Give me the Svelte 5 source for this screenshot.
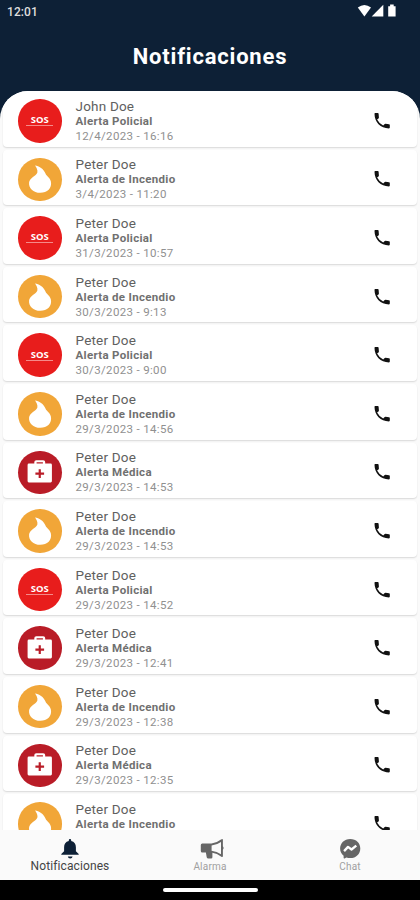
<script>
  const police = 'Alerta Policial';
  const fire = 'Alerta de Incendio';
  const medical = 'Alerta Médica';
  const items = [
    ['John Doe', police, '12/4/2023 - 16:16'],
    ['Peter Doe', fire, '3/4/2023 - 11:20'],
    ['Peter Doe', police, '31/3/2023 - 10:57'],
    ['Peter Doe', fire, '30/3/2023 - 9:13'],
    ['Peter Doe', police, '30/3/2023 - 9:00'],
    ['Peter Doe', fire, '29/3/2023 - 14:56'],
    ['Peter Doe', medical, '29/3/2023 - 14:53'],
    ['Peter Doe', fire, '29/3/2023 - 14:53'],
    ['Peter Doe', police, '29/3/2023 - 14:52'],
    ['Peter Doe', medical, '29/3/2023 - 12:41'],
    ['Peter Doe', fire, '29/3/2023 - 12:38'],
    ['Peter Doe', medical, '29/3/2023 - 12:35'],
    ['Peter Doe', fire, '']
  ].map(([name, alert, date]) => ({ name, alert, date }));
</script>

<div class="screen">
  <div class="status">
    <span class="clock">12:01</span>
    <svg class="signals" width="42" height="14" viewBox="0 0 42 14">
      <path d="M.8 3.6Q7.4-1.600 14 3.600L7.400 12.600z" />
      <path d="M26.300.8V12.600H14.700z" />
      <path d="M31.200 2.200h1.900V.5h3.600v1.700h1.900v10.400h-7.400z" />
    </svg>
  </div>
  <header><h1>Notificaciones</h1></header>
  <main>
    {#each items as item}
      <article>
        <div class="badge" class:fire={item.alert === fire} class:medical={item.alert === medical}>
          {#if item.alert === police}
            <span class="sos">SOS</span>
          {:else if item.alert === fire}
            <svg width="44" height="44" viewBox="0 0 44 44">
              <path fill="#fff" d="M17.200 8.300C21 8.800 26.200 11.800 27.800 16.400C28.700 19 32.200 20.400 33.200 24.300C34.800 31.300 29.400 36 22.600 36C15.400 36 10.600 31.300 11.200 25.500C11.700 20.600 18.400 19 19.600 15.300C20.100 12.700 18.600 10 17.200 8.300z" />
            </svg>
          {:else}
            <svg width="44" height="44" viewBox="0 0 44 44">
              <path fill="#fff" fill-rule="evenodd" d="M11 13.500h5.500v-1.500q0-2 2-2h7q2 0 2 2v1.500H33q1.300 0 1.300 1.300v16.400q0 1.300-1.300 1.300H11q-1.300 0-1.300-1.300V14.800Q9.700 13.500 11 13.500zM18.800 13.500h6.400v-1.300h-6.400z" />
              <path fill="#b91c27" d="M20.900 19.200h2.200v3.300h3.300v2.200h-3.300v3.300h-2.200v-3.300h-3.300v-2.200h3.300z" />
            </svg>
          {/if}
        </div>
        <div class="info">
          <span class="name">{item.name}</span>
          <strong>{item.alert}</strong>
          <time>{item.date}</time>
        </div>
        <svg class="phone" width="18" height="18" viewBox="0 0 18 18">
          <path d="M1.500 1.800Q1.500 1.100 2.200 1.100H4.800Q5.500 1.100 5.600 1.800L5.900 5.400Q5.900 6.100 5.400 6.500L4.100 7.600Q6 11.500 10.200 13.500L11.400 12.200Q11.900 11.700 12.600 11.800L16 12.200Q16.800 12.300 16.800 13.100V15.600Q16.800 16.400 16 16.400C7.500 16.300 1.500 10.200 1.500 1.800z" />
        </svg>
      </article>
    {/each}
  </main>
  <nav>
    <div class="tab active">
      <svg width="20" height="22" viewBox="0 0 20 22">
        <path fill="#0d2036" d="M8.800 2.900V2.200a1.200 1.200 0 0 1 2.400 0v.7c3.200.7 4.700 3.100 4.700 6.400v4l2.800 2.600v.8H1.300v-.8l2.800-2.600V9.300c0-3.300 1.500-5.700 4.700-6.400zM7.800 18.600h4.800q-.3 1.900-2.400 1.900t-2.400-1.900z" />
      </svg>
      <span>Notificaciones</span>
    </div>
    <div class="tab">
      <svg class="horn" width="26" height="22" viewBox="0 0 26 22">
        <path fill="#666" fill-rule="evenodd" d="M3.300 5.500H12.500Q17.500 5.200 22 1.600Q23.900.3 23.900 2.100V8.300Q25.500 10 23.900 11.700V18Q23.900 19.800 22 18.500Q18.100 15.200 13.400 14.700V19.200Q13.400 20.500 12.100 20.500H9.400Q8 20.500 7.700 19.200L6.900 14.600H3.300Q1.800 14.600 1.800 13.100V7Q1.800 5.500 3.300 5.500zM12.600 7.500v5.200q5.300.5 9.400 3.500V4.100Q17.900 7.100 12.600 7.500z" />
      </svg>
      <span class="wide">Alarma</span>
    </div>
    <div class="tab">
      <svg width="22" height="22" viewBox="0 0 22 22">
        <path fill="#666" d="M11.200.9C5.200.9 1.100 5.200 1.100 10.600c0 3 1.300 5.500 3.500 7.200v2q.1.900 1 .6l1.800-.9q1.800.6 3.800.6c6 0 10.100-4.300 10.100-9.700S17.200.9 11.200.9z" />
        <path fill="none" stroke="#fff" stroke-width="2.300" stroke-linejoin="round" d="M5.100 13.100L9 8.900L12.500 11.500L17.300 7.700" />
      </svg>
      <span class="wide">Chat</span>
    </div>
  </nav>
  <div class="system"><i></i></div>
</div>

<style>
  .screen {
    height: 900px;
    display: flex;
    flex-direction: column;
    overflow: hidden;
    background: #0d2036;
    font-family: Roboto, sans-serif;
  }
  .status {
    flex: none;
    height: 24px;
    display: flex;
    justify-content: space-between;
    padding: 4px 21px 0 7px;
    box-sizing: border-box;
    color: #ddd;
  }
  .clock { font-size: 12px; line-height: 16px; font-weight: 500; letter-spacing: .1px; }
  .signals { fill: #fff; }
  header { flex: none; height: 67px; text-align: center; }
  h1 {
    margin: 0;
    padding-top: 19px;
    font-size: 22px;
    line-height: 28px;
    font-weight: 700;
    letter-spacing: .8px;
    color: #fff;
  }
  main {
    flex: 1;
    min-height: 0;
    overflow: hidden;
    background: #fafafa;
    border-radius: 28px 28px 0 0;
    padding: 0 3px;
  }
  article {
    height: 55.600px;
    margin-bottom: 3px;
    box-sizing: border-box;
    display: flex;
    align-items: center;
    padding: 4px 26px 0 15px;
    background: #fff;
    border-radius: 4px;
    box-shadow: 0 1px 1.500px #0002;
  }
  .badge {
    width: 43.500px;
    height: 43.500px;
    flex: none;
    border-radius: 50%;
    background: #e81d1c;
    display: flex;
    align-items: center;
    justify-content: center;
  }
  .badge.fire { background: #f1a638; }
  .badge.medical { background: #b91c27; }
  .sos {
    width: 27px;
    margin-bottom: 1px;
    border-bottom: 1px solid #f58a89;
    color: #fff;
    text-align: center;
    font: 700 9.500px/11px "Open Sans", sans-serif;
  }
  .info {
    flex: 1;
    margin-left: 14px;
    display: flex;
    flex-direction: column;
    color: #707070;
  }
  .name { margin-top: -1px; font-size: 13.500px; line-height: 16px; letter-spacing: .2px; color: #606060; }
  strong { font-size: 11.500px; line-height: 15px; font-weight: 700; letter-spacing: .31px; }
  time { height: 14px; font-size: 11.500px; line-height: 14px; letter-spacing: .34px; color: #909090; }
  .phone { flex: none; fill: #111; }
  nav {
    flex: none;
    height: 50px;
    display: flex;
    background: #fafafa;
  }
  .tab {
    flex: 1;
    padding-top: 8px;
    display: flex;
    flex-direction: column;
    align-items: center;
    font-size: 10px;
    line-height: 13px;
    color: #a0a0a0;
  }
  .tab svg { flex: none; }
  .tab .horn { margin-left: 3px; }
  .wide { letter-spacing: .2px; }
  .active { color: #444; font-size: 12px; letter-spacing: .1px; }
  .system {
    flex: none;
    height: 20px;
    background: #000;
    display: flex;
    align-items: center;
    justify-content: center;
  }
  .system i { width: 95px; height: 4px; border-radius: 2px; background: #fff; }
</style>
